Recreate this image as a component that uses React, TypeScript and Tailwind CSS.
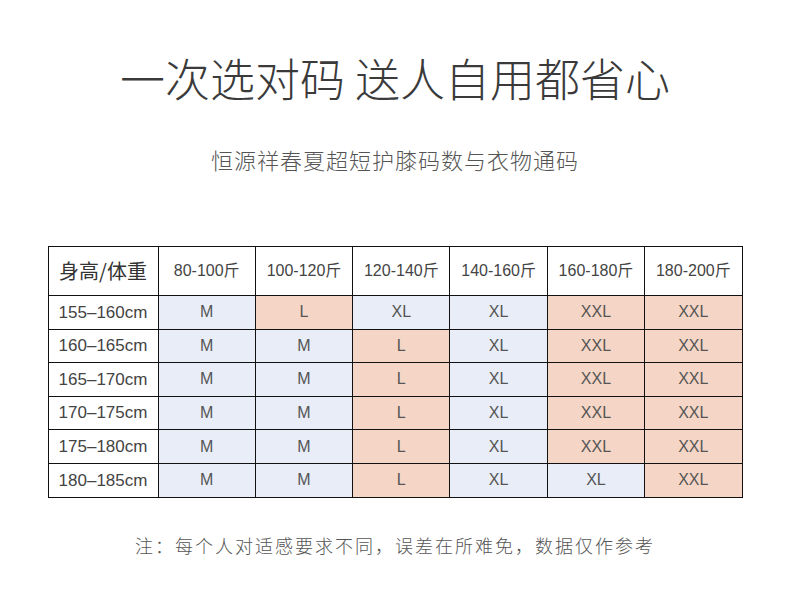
const font = { fontFamily: '"Noto Sans CJK SC", "Noto Sans", sans-serif' };
const cellFont = { fontFamily: '"Liberation Sans", "Noto Sans CJK SC", sans-serif' };

const heads = ["80-100斤", "100-120斤", "120-140斤", "140-160斤", "160-180斤", "180-200斤"];

const rows: [string, string[]][] = [
  ["155–160cm", ["M", "L", "XL", "XL", "XXL", "XXL"]],
  ["160–165cm", ["M", "M", "L", "XL", "XXL", "XXL"]],
  ["165–170cm", ["M", "M", "L", "XL", "XXL", "XXL"]],
  ["170–175cm", ["M", "M", "L", "XL", "XXL", "XXL"]],
  ["175–180cm", ["M", "M", "L", "XL", "XXL", "XXL"]],
  ["180–185cm", ["M", "M", "L", "XL", "XL", "XXL"]],
];

const peach = (s: string, row: number, col: number) => {
  if (row === 0) return col === 1 || col >= 4;
  return col === 2 || (col >= 4 && s === "XXL");
};

export default function App() {
  return (
    <div className="w-[790px] h-[600px] bg-white flex flex-col items-center text-[#444]" style={font}>
      <h1 className="mt-[50px] text-[45px] leading-[56px] font-light text-[#3a3a3a]">
        一次选对码 送人自用都省心
      </h1>
      <p className="mt-[38px] text-[22px] leading-[30px] text-[#555] tracking-[1px] font-light">
        恒源祥春夏超短护膝码数与衣物通码
      </p>
      <table className="mt-[72px] border-collapse w-[695px] table-fixed" style={cellFont}>
        <colgroup>
          <col className="w-[110px]" />
          {heads.map((h) => (
            <col key={h} />
          ))}
        </colgroup>
        <thead>
          <tr className="h-[49px]">
            <th className="border border-[#111] text-[20px] font-normal text-[#333]" style={font}>
              身高/体重
            </th>
            {heads.map((h) => (
              <th key={h} className="border border-[#111] text-[16px] font-normal text-[#444]">
                {h}
              </th>
            ))}
          </tr>
        </thead>
        <tbody>
          {rows.map(([h, cells], r) => (
            <tr key={h} className="h-[33.6px]">
              <td className="border border-[#111] text-[17px] text-center text-[#444]">{h}</td>
              {cells.map((c, i) => (
                <td
                  key={i}
                  className={
                    "border border-[#111] text-[16px] text-center text-[#555] " +
                    (peach(c, r, i) ? "bg-[#f5d6c6]" : "bg-[#e8edf8]")
                  }
                >
                  {c}
                </td>
              ))}
            </tr>
          ))}
        </tbody>
      </table>
      <p className="mt-[34px] text-[18px] leading-[26px] tracking-[2px] text-[#555] font-light">
        注：每个人对适感要求不同，误差在所难免，数据仅作参考
      </p>
    </div>
  );
}
